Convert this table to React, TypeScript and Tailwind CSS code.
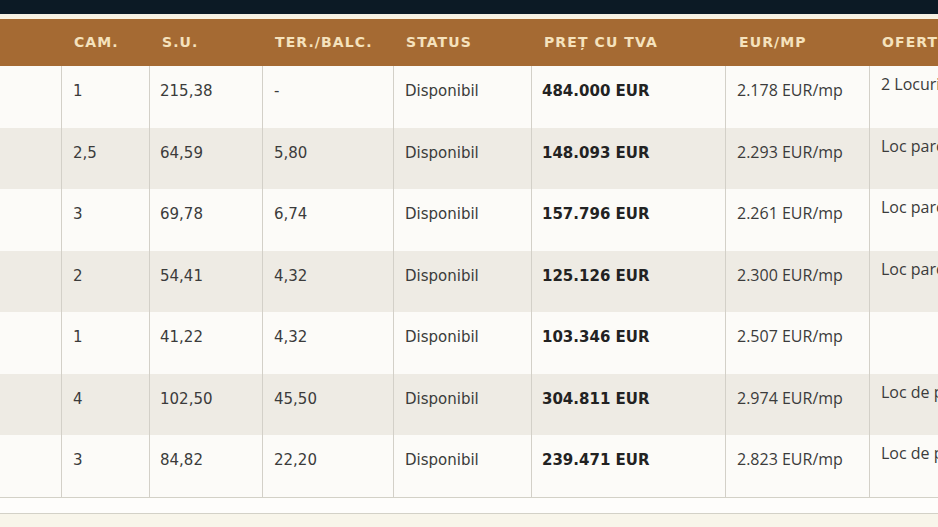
import React from "react";

type Row = {
  cam: string;
  su: string;
  ter: string;
  status: string;
  pret: string;
  eur: string;
  oferta: string;
};

const rows: Row[] = [
  { cam: "1", su: "215,38", ter: "-", status: "Disponibil", pret: "484.000 EUR", eur: "2.178 EUR/mp", oferta: "2 Locuri de parcare incluse" },
  { cam: "2,5", su: "64,59", ter: "5,80", status: "Disponibil", pret: "148.093 EUR", eur: "2.293 EUR/mp", oferta: "Loc parcare inclus" },
  { cam: "3", su: "69,78", ter: "6,74", status: "Disponibil", pret: "157.796 EUR", eur: "2.261 EUR/mp", oferta: "Loc parcare inclus" },
  { cam: "2", su: "54,41", ter: "4,32", status: "Disponibil", pret: "125.126 EUR", eur: "2.300 EUR/mp", oferta: "Loc parcare inclus" },
  { cam: "1", su: "41,22", ter: "4,32", status: "Disponibil", pret: "103.346 EUR", eur: "2.507 EUR/mp", oferta: "" },
  { cam: "4", su: "102,50", ter: "45,50", status: "Disponibil", pret: "304.811 EUR", eur: "2.974 EUR/mp", oferta: "Loc de parcare inclus" },
  { cam: "3", su: "84,82", ter: "22,20", status: "Disponibil", pret: "239.471 EUR", eur: "2.823 EUR/mp", oferta: "Loc de parcare inclus" },
];

const cols = "grid grid-cols-[61px_88px_113px_131px_138px_194px_144px_1fr]";
const dv = "font-[family-name:'DejaVu_Sans',sans-serif]";
const os = "font-[family-name:'Open_Sans',sans-serif]";

export default function App() {
  return (
    <div className="w-[938px] h-[527px] overflow-hidden bg-[#f8f5eb] flex flex-col">
      <div className="h-[14px] bg-[#0c1a25] shrink-0" />
      <div className="h-[5px] bg-gradient-to-b from-[#f4efe3] to-[#fbf3e2] shrink-0" />
      <div className={`${cols} h-[47px] bg-[#a56a33] shrink-0 items-center text-[14px] font-bold tracking-[1.1px] text-[#f5e2bd] ${dv} whitespace-nowrap`}>
        <div />
        <div className="pl-[13px]">CAM.</div>
        <div className="pl-[13px]">S.U.</div>
        <div className="pl-[13px]">TER./BALC.</div>
        <div className="pl-[13px]">STATUS</div>
        <div className="pl-[13px]">PREȚ CU TVA</div>
        <div className="pl-[14px]">EUR/MP</div>
        <div className="pl-[13px] overflow-hidden">OFERTĂ</div>
      </div>
      <div className="flex flex-col shrink-0">
        {rows.map((r, i) => (
          <div
            key={i}
            className={`${cols} ${i % 2 === 0 ? "h-[62px] bg-[#fcfbf8]" : "h-[61px] bg-[#eeebe4]"} text-[15px] text-[#3b3b3b] whitespace-nowrap overflow-hidden`}
          >
            <div />
            <div className={`border-l border-[#d3d0c8] pl-[11px] pt-[14px] ${dv}`}>{r.cam}</div>
            <div className={`border-l border-[#d3d0c8] pl-[10px] pt-[14px] ${dv}`}>{r.su}</div>
            <div className={`border-l border-[#d3d0c8] pl-[11px] pt-[14px] ${dv}`}>{r.ter}</div>
            <div className={`border-l border-[#d3d0c8] pl-[11px] pt-[14px] ${dv}`}>{r.status}</div>
            <div className={`border-l border-[#d3d0c8] pl-[10px] pt-[14px] font-bold text-[#222222] ${dv}`}>{r.pret}</div>
            <div className={`border-l border-[#d3d0c8] pl-[11px] pt-[12px] text-[16px] ${os}`}>{r.eur}</div>
            <div className={`border-l border-[#d3d0c8] pl-[11px] pt-[6px] text-[16px] overflow-hidden ${os}`}>{r.oferta}</div>
          </div>
        ))}
      </div>
      <div className="h-[17px] bg-[#fefdfb] border-t border-b border-[#d3d1c7] shrink-0" />
      <div className="flex-1 bg-[#f8f5ea]" />
    </div>
  );
}
